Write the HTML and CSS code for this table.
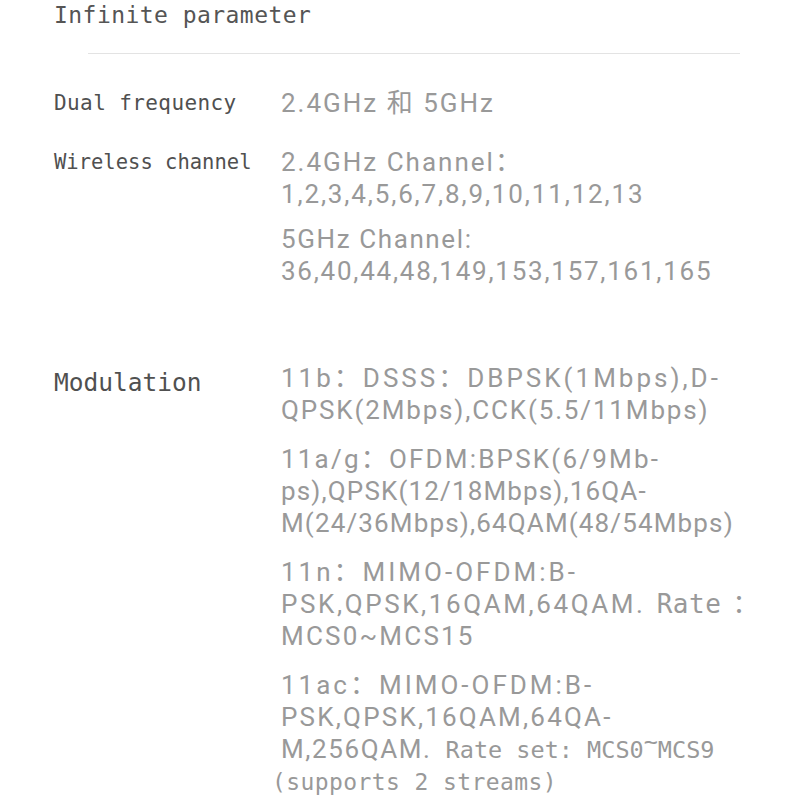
FILE: index.html
```html
<!DOCTYPE html>
<html lang="en">
<head>
<meta charset="utf-8">
<title>Infinite parameter</title>
<link rel="stylesheet" href="styles.css">
</head>
<body>
<div class="page">
  <h1 class="title">Infinite parameter</h1>
  <div class="divider"></div>

  <div class="spec spec-dual">
    <div class="label label-dual">Dual frequency</div>
    <div class="value">
      <div class="para"><span class="line ls-a">2.4GHz 和 5GHz</span></div>
    </div>
  </div>

  <div class="spec spec-channel">
    <div class="label label-tight">Wireless channel</div>
    <div class="value value-channel">
      <div class="para">
        <span class="line ls-a">2.4GHz Channel：</span>
        <span class="line ls-b">1,2,3,4,5,6,7,8,9,10,11,12,13</span>
      </div>
      <div class="para">
        <span class="line">5GHz Channel:</span>
        <span class="line ls-c">36,40,44,48,149,153,157,161,165</span>
      </div>
    </div>
  </div>

  <div class="spec spec-mod">
    <div class="label label-lg">Modulation</div>
    <div class="value">
      <div class="para">
        <span class="line ls-wide">11b：DSSS：DBPSK(1Mbps),D-</span>
        <span class="line ls-b">QPSK(2Mbps),CCK(5.5/11Mbps)</span>
      </div>
      <div class="para">
        <span class="line ls-d">11a/g：OFDM:BPSK(6/9Mb-</span>
        <span class="line ls-e">ps),QPSK(12/18Mbps),16QA-</span>
        <span class="line ls-e">M(24/36Mbps),64QAM(48/54Mbps)</span>
      </div>
      <div class="para">
        <span class="line ls-wide">11n：MIMO-OFDM:B-</span>
        <span class="line ls-f">PSK,QPSK,16QAM,64QAM.<span class="mono mono-rate"> Rate ：</span></span>
        <span class="line ls-d">MCS0~MCS15</span>
      </div>
      <div class="para">
        <span class="line ls-wide">11ac：MIMO-OFDM:B-</span>
        <span class="line ls-d">PSK,QPSK,16QAM,64QA-</span>
        <span class="line">M,256QAM.<span class="mono mono-set"> Rate set: MCS0<span class="tilde">~</span>MCS9</span></span>
        <span class="line line-mono">(supports 2 streams)</span>
      </div>
    </div>
  </div>
</div>
</body>
</html>
```

FILE: styles.css
```css
html, body {
  margin: 0;
  background: #ffffff;
}

.page {
  padding-left: 54px;
}

.title {
  margin: 0;
  font: 400 23px/30px "DejaVu Sans Mono", monospace;
  letter-spacing: 0.45px;
  color: #555555;
}

.divider {
  margin: 23px 0 0 34px;
  width: 652px;
  height: 1px;
  background: #e3e3e3;
}

.spec {
  display: grid;
  grid-template-columns: 227px auto;
  align-items: start;
}

.spec-dual {
  margin-top: 33px;
}

.spec-channel {
  margin-top: 27px;
}

.spec-mod {
  margin-top: 75px;
}

.label {
  font: 400 21px/32px "DejaVu Sans Mono", monospace;
  letter-spacing: 0.4px;
  color: #505050;
  white-space: nowrap;
}

.label-tight {
  font-size: 20.5px;
  letter-spacing: 0;
}

.label-lg {
  font-size: 24.5px;
  letter-spacing: 0;
  margin-top: 5px;
}

.value {
  font: 400 26px/32px Roboto, "Noto Sans CJK SC", sans-serif;
  letter-spacing: 1.6px;
  color: #999999;
}

.para + .para {
  margin-top: 17px;
}

.value-channel .para + .para {
  margin-top: 13px;
}

.line {
  display: block;
  white-space: nowrap;
}

.ls-a { letter-spacing: 2px; }
.ls-b { letter-spacing: 1.85px; }
.ls-c { letter-spacing: 1.75px; }
.ls-d { letter-spacing: 2.2px; }
.ls-e { letter-spacing: 1.15px; }
.ls-f { letter-spacing: 2.6px; }
.ls-wide { letter-spacing: 3px; }

.mono {
  font-family: "DejaVu Sans Mono", "Noto Sans CJK SC", monospace;
}

.mono-rate {
  font-size: 26px;
  letter-spacing: 0.5px;
  word-spacing: -5px;
}

.mono-set {
  font-size: 23.5px;
  letter-spacing: 0;
}

.tilde {
  vertical-align: 0.35em;
  line-height: 0;
}

.line-mono {
  font: 400 23px/32px "DejaVu Sans Mono", monospace;
  letter-spacing: 0.4px;
  margin-left: -9px;
}
```
